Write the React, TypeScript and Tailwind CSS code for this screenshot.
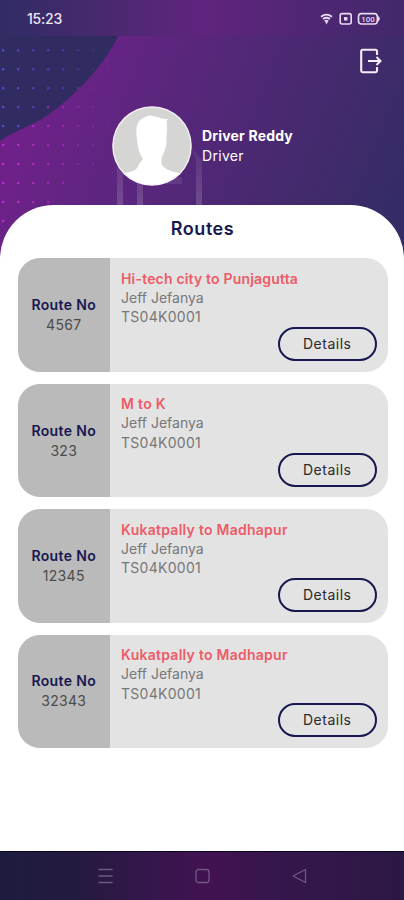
const routes = [
  { no: "4567", title: "Hi-tech city to Punjagutta", spacing: "tracking-[0.18px]" },
  { no: "323", title: "M to K", spacing: "tracking-[0.3px]" },
  { no: "12345", title: "Kukatpally to Madhapur", spacing: "tracking-[0.26px]" },
  { no: "32343", title: "Kukatpally to Madhapur", spacing: "tracking-[0.26px]" },
];

const dotRows = [8, 8, 8, 8, 8, 7, 7, 5, 4, 2];

function Backdrop() {
  return (
    <svg className="absolute inset-0" width="404" height="262" viewBox="0 0 404 262" aria-hidden="true">
      <defs>
        <linearGradient id="sky" gradientUnits="userSpaceOnUse" x1="35" y1="95" x2="385" y2="235">
          <stop offset="0" stopColor="#6f2189" />
          <stop offset="0.3" stopColor="#5b267e" />
          <stop offset="0.65" stopColor="#482970" />
          <stop offset="1" stopColor="#352c65" />
        </linearGradient>
        <linearGradient id="bar" x1="0" y1="0" x2="1" y2="0">
          <stop offset="0" stopColor="#302c64" />
          <stop offset="0.25" stopColor="#48296f" />
          <stop offset="0.5" stopColor="#60247f" />
          <stop offset="0.75" stopColor="#502674" />
          <stop offset="1" stopColor="#42286b" />
        </linearGradient>
        <linearGradient id="beam" x1="0" y1="0" x2="0" y2="1">
          <stop offset="0" stopColor="#fff" stopOpacity="0.05" />
          <stop offset="1" stopColor="#fff" stopOpacity="0.17" />
        </linearGradient>
      </defs>
      <rect width="404" height="262" fill="url(#sky)" />
      <path d="M0 36H118C106 62 78 95 42 119C28 127 12 132 0 141Z" fill="#302c61" />
      <rect width="404" height="36" fill="url(#bar)" />
      {dotRows.map((count, row) =>
        Array.from({ length: count }, (_, col) => (
          <rect
            key={`${row}-${col}`}
            x={2.1 + col * 15}
            y={49.2 + row * 18.95}
            width="2.2"
            height="2.2"
            fill={row * 19 + col * 11 < 90 ? "#5b4ad6" : "#bd33d2"}
            opacity={Math.max(0.14, 1 - col * 0.125)}
          />
        )),
      )}
      <path d="M117 165H123V206H117ZM137 180H143V206H137ZM196 160L191 147L202 160V206H196Z" fill="url(#beam)" />
      <path d="M170 177H182V184H166Z" fill="#fff" opacity="0.09" />
    </svg>
  );
}

function StatusIcons() {
  return (
    <svg className="mt-[2px]" width="62" height="14" viewBox="0 0 62 14" fill="none" aria-hidden="true">
      <path d="M1 4.7Q6.5.6 12 4.7M3 7Q6.5 4.5 10 7M4.8 9.2Q6.5 8 8.2 9.2" stroke="#e8dcf2" strokeWidth="1.9" />
      <path d="M5 9.5H8L6.5 12.5Z" fill="#e8dcf2" />
      <rect x="20.2" y="1.6" width="11" height="10.4" rx="2" stroke="#e8dcf2" strokeWidth="1.6" />
      <rect x="24" y="5.1" width="3.4" height="3.4" fill="#e8dcf2" />
      <rect x="38.5" y="1.6" width="18.8" height="10.4" rx="3" stroke="#e8dcf2" strokeWidth="1.6" />
      <path d="M58 3.8Q61.6 6.8 58 9.8Z" fill="#e8dcf2" />
      <text x="48" y="9.7" fill="#e8dcf2" fontSize="8" fontFamily="Roboto, sans-serif" fontWeight="500" textAnchor="middle">100</text>
    </svg>
  );
}

function LogoutIcon() {
  return (
    <svg width="24" height="28" viewBox="0 0 24 28" fill="none" stroke="#f6edfa" strokeWidth="2.1" aria-hidden="true">
      <path d="M18 8V4.2Q18 2.8 16.6 2.8H3.6Q2.2 2.8 2.2 4.2V23.8Q2.2 25.2 3.6 25.2H16.6Q18 25.2 18 23.8V20" />
      <path d="M9 14H21.5M17.5 10L21.5 14L17.5 18" strokeWidth="2" />
    </svg>
  );
}

function Avatar() {
  return (
    <svg width="80" height="80" viewBox="0 0 80 80" aria-hidden="true">
      <defs>
        <clipPath id="face"><circle cx="40" cy="40" r="38.7" /></clipPath>
      </defs>
      <circle cx="40" cy="40" r="39.8" fill="#f8f4f9" />
      <circle cx="40" cy="40" r="38.5" fill="#d5d5d4" />
      <path clipPath="url(#face)" d="M25 33C23.5 23 24.5 15 31 12L37 9.5C40 9 43 11 46 11C50 13 53 13 56 13C53.5 15 55.5 18 55 24L54.5 33C55 43 50.5 48 49.5 53V58C52 63 58 65 67 67V80H12V67C20 66 26 64 27 58L31 53C27 47 26 42 25 33Z" fill="#fff" />
    </svg>
  );
}

export default function App() {
  return (
    <main className="relative flex h-[900px] w-[404px] flex-col overflow-hidden bg-white font-['Inter',sans-serif]">
      <Backdrop />
      <div className="relative flex h-9 shrink-0 items-center justify-between pl-[27px] pr-[22px] text-[#f1e7f6]">
        <span className="text-[14px] font-medium tracking-[-0.2px]">15:23</span>
        <StatusIcons />
      </div>
      <header className="relative h-[169px] shrink-0">
        <div className="flex justify-end pr-[21px] pt-[11px]"><LogoutIcon /></div>
        <div className="flex items-center gap-[10.5px] pl-[111.5px] pt-[30.5px]">
          <Avatar />
          <div className="flex flex-col whitespace-nowrap leading-[20px] text-white">
            <strong className="text-[14px] font-bold tracking-[0.18px]">Driver Reddy</strong>
            <span className="text-[14px] tracking-[0.3px]">Driver</span>
          </div>
        </div>
      </header>
      <section className="relative flex flex-1 flex-col rounded-t-[54px] bg-white pl-[17.5px] pr-[16.5px]">
        <h1 className="flex h-[53.4px] items-start justify-center pt-[12px] text-[18px] font-semibold leading-[24px] tracking-[0.55px] text-[#17184f]">Routes</h1>
        <div className="flex flex-col gap-[11.7px]">
          {routes.map((route) => (
            <article key={route.no} className="flex h-[113.7px] overflow-hidden rounded-[22px] bg-[#e3e3e3]">
              <div className="flex w-[92.5px] shrink-0 flex-col items-center justify-center whitespace-nowrap bg-[#bababa] leading-[20px]">
                <span className="text-[14px] font-semibold tracking-[0.35px] text-[#17184f]">Route No</span>
                <span className="text-[14px] tracking-[0.3px] text-[#4c4c4c]">{route.no}</span>
              </div>
              <div className="flex flex-1 flex-col whitespace-nowrap pl-[11px] pr-[10.5px] pt-[10.4px] leading-[19.3px]">
                <span className={`text-[14px] font-semibold text-[#ed5c67] ${route.spacing}`}>{route.title}</span>
                <span className="text-[14px] text-[#777]">Jeff Jefanya</span>
                <span className="text-[14px] tracking-[0.28px] text-[#777]">TS04K0001</span>
                <button className="mt-[0.7px] flex h-[34px] w-[99.5px] shrink-0 items-center justify-center self-end rounded-full border-2 border-[#17184f] text-[14px] leading-[18px] tracking-[0.5px] text-[#292929]">Details</button>
              </div>
            </article>
          ))}
        </div>
      </section>
      <nav className="relative flex h-[49px] shrink-0 items-center justify-center gap-[82px] border-t border-[#08051c] bg-[linear-gradient(90deg,#1d1c3c_0%,#251a40_20%,#36164c_38%,#421252_52%,#36164c_68%,#2c1844_100%)] text-[#715782]">
        <svg width="15" height="16" viewBox="0 0 15 16" stroke="currentColor" strokeWidth="1.3"><path d="M.5 1.5H14.5M.5 8H14.5M.5 14.5H14.5" /></svg>
        <svg width="15" height="16" viewBox="0 0 15 16" fill="none" stroke="currentColor" strokeWidth="1.3"><rect x="1" y="1.5" width="13" height="13" rx="2.5" /></svg>
        <svg width="15" height="16" viewBox="0 0 15 16" fill="none" stroke="currentColor" strokeWidth="1.3" strokeLinejoin="round"><path d="M1 8L13.5 1.5V14.5Z" /></svg>
      </nav>
    </main>
  );
}
